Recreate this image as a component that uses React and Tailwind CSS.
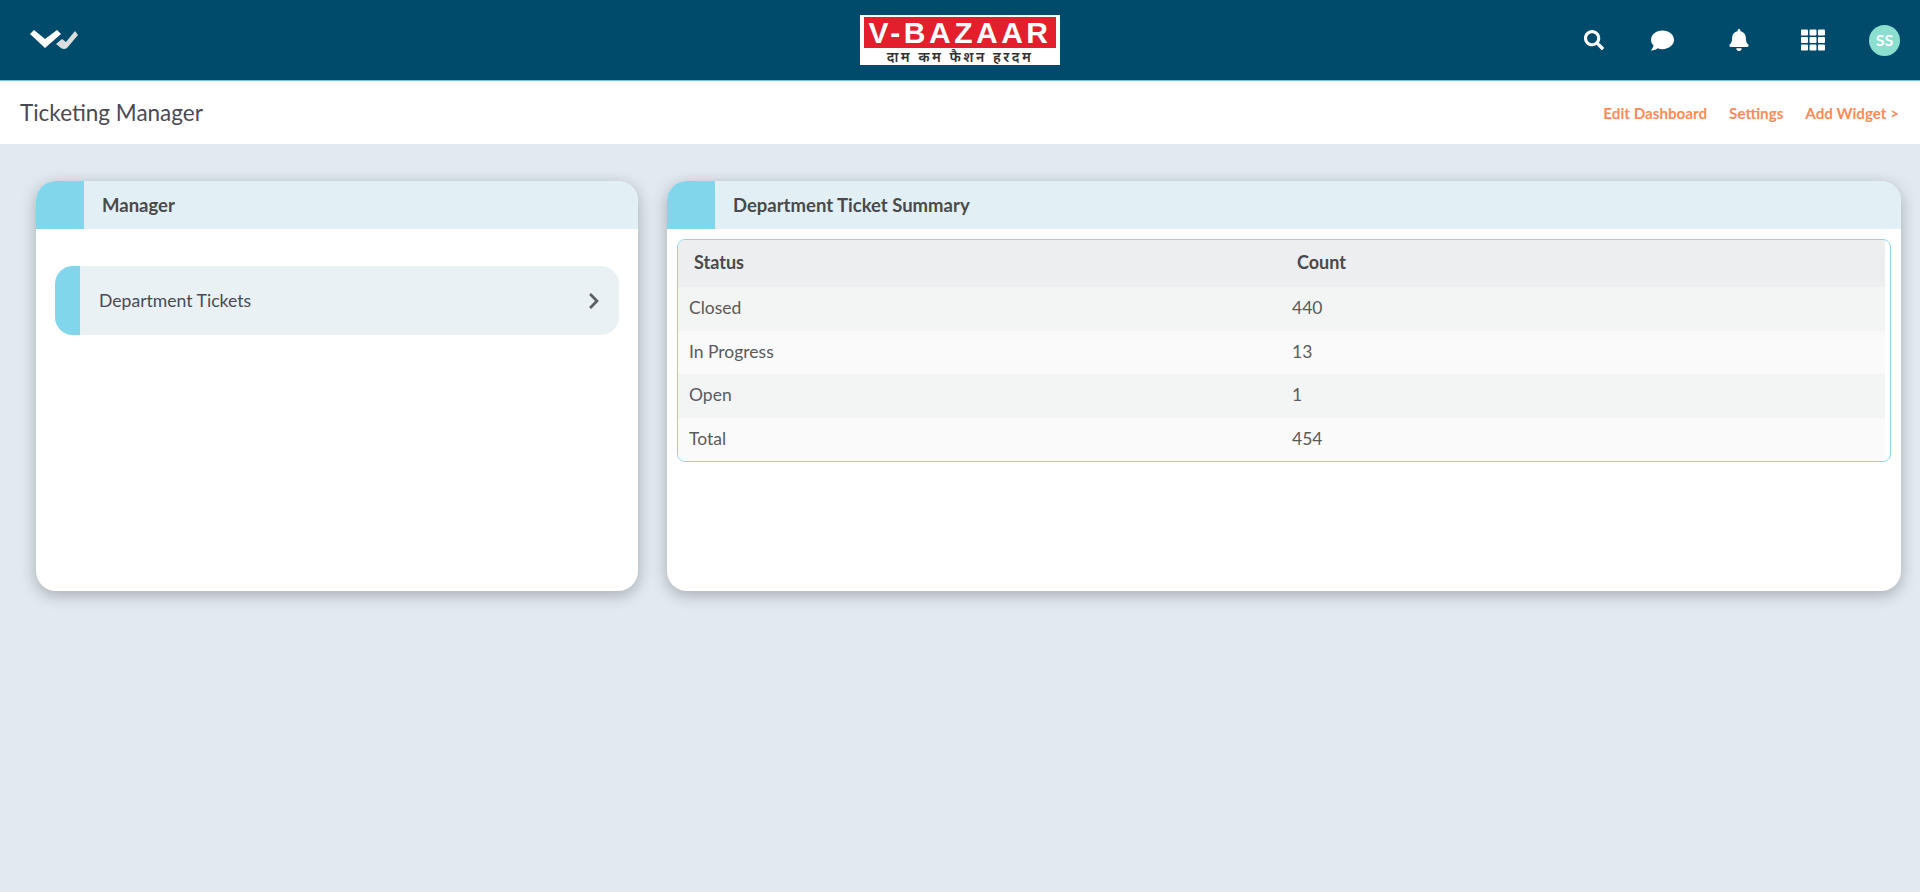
import { FaSearch, FaComment, FaBell, FaTh, FaChevronRight } from "react-icons/fa";

const rows = [
  { status: "Closed", count: "440", bg: "bg-[#f3f5f5]" },
  { status: "In Progress", count: "13", bg: "bg-[#fafafa]" },
  { status: "Open", count: "1", bg: "bg-[#f3f5f5]" },
  { status: "Total", count: "454", bg: "bg-[#fafafa]" },
];

function Logo() {
  return (
    <div className="w-[200px] h-[50px] bg-white px-[2px] pt-[2px] flex flex-col items-center">
      <div className="w-[192px] h-[31px] bg-[#e31e2d] flex items-center justify-center text-white text-[30px] leading-none font-bold font-['Liberation_Sans',sans-serif] tracking-[3.5px]">
        V-BAZAAR
      </div>
      <div className="h-[17px] text-[#333] text-[14px] leading-[17px] font-['Noto_Sans','DejaVu_Sans',sans-serif] font-semibold tracking-[2.5px] whitespace-nowrap">
        दाम कम फैशन हरदम
      </div>
    </div>
  );
}

function CardHeader({ title }) {
  return (
    <div className="h-12 bg-[#e2f0f6] flex items-center">
      <div className="w-12 h-12 bg-[#82d6eb]"></div>
      <h2 className="ml-[18px] pt-[2px] text-[18.5px] font-bold text-[#4a4a4a]">{title}</h2>
    </div>
  );
}

export default function App() {
  return (
    <div className="min-h-[892px] bg-[#e2eaf1] font-['Lato',sans-serif]">
      <header className="h-[81px] bg-[#004b6b] border-b border-[#7fc4dc] flex items-center justify-between pl-[27px] pr-[20px]">
        <svg width="54" height="22" viewBox="0 0 52 22">
          <path d="M2 5 L6 1 L17 10 L29 1 L33 5 L17 19 Z" fill="#fff" />
          <path d="M28 15 L34 10 L38 13 L47 2 L50 6 L39 19 Q36 21 33 19 Z" fill="#dcdcdc" />
        </svg>
        <div className="absolute left-[860px] top-[15px]">
          <Logo />
        </div>
        <div className="flex items-center text-white">
          <FaSearch className="text-[20px]" />
          <FaComment className="ml-[47px] text-[23px]" />
          <FaBell className="ml-[54px] text-[22px]" />
          <FaTh className="ml-[51px] text-[24px]" />
          <div className="ml-[44px] w-[31px] h-[31px] rounded-full bg-[#8adfce] flex items-center justify-center text-[16px] font-bold">
            SS
          </div>
        </div>
      </header>

      <div className="h-[63px] bg-white flex items-center justify-between pl-5 pr-[21px]">
        <h1 className="text-[22.5px] text-[#4a4a55]">Ticketing Manager</h1>
        <div className="flex items-center gap-[22px] text-[15.2px] font-bold text-[#ff8a57] pt-[2px]">
          <span>Edit Dashboard</span>
          <span>Settings</span>
          <span>Add Widget &gt;</span>
        </div>
      </div>

      <main className="flex gap-[29px] pl-9 pr-[19px] pt-[37px]">
        <section className="w-[602px] h-[410px] bg-white rounded-[20px] overflow-hidden shadow-[0_4px_16px_rgba(0,0,0,0.28)]">
          <CardHeader title="Manager" />
          <div className="px-[19px] pt-[37px]">
            <div className="h-[69px] bg-[#e9f1f4] rounded-[18px] overflow-hidden flex items-center">
              <div className="w-[25px] h-full bg-[#82d6eb]"></div>
              <span className="ml-[19px] pt-[1px] text-[17.6px] text-[#4a4a55]">Department Tickets</span>
              <FaChevronRight className="ml-auto mr-[16px] text-[18px] text-[#5c6066]" />
            </div>
          </div>
        </section>

        <section className="flex-1 h-[410px] bg-white rounded-[20px] overflow-hidden shadow-[0_4px_16px_rgba(0,0,0,0.28)]">
          <CardHeader title="Department Ticket Summary" />
          <div className="px-[10px] pt-[10px]">
            <div className="h-[223px] border border-[#8fd3e8] rounded-[8px] overflow-hidden pr-[5px]">
              <div className="h-[47px] bg-[#edeef0] flex items-center text-[18px] font-bold text-[#4a4a4a] pb-[2px]">
                <span className="w-[619px] pl-4">Status</span>
                <span>Count</span>
              </div>
              {rows.map((r) => (
                <div key={r.status} className={`h-[43.5px] flex items-center text-[17.5px] text-[#5a5a5a] pb-[1px] ${r.bg}`}>
                  <span className="w-[614px] pl-[11px]">{r.status}</span>
                  <span>{r.count}</span>
                </div>
              ))}
            </div>
          </div>
        </section>
      </main>
    </div>
  );
}
